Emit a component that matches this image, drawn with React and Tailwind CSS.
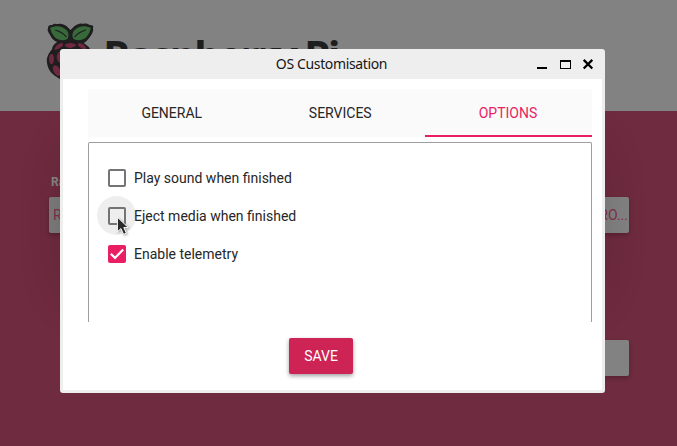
import React from "react";

function RaspberryLogo() {
  return (
    <svg width="49" height="60" viewBox="0 0 48 60" preserveAspectRatio="none" className="shrink-0">
      <g fill="#1e1e1e">
        <path d="M2 5 C2 2 4 2 6 2 C8 0 10 1 12 1 C15 0 18 2 20 3 L24 7 L28 3 C31 1 34 0 36 1 C39 0 41 1 43 2 C46 2 47 3 46 5 C47 8 45 11 43 14 C41 17 39 19 37 20 L42 24 C45 29 47 34 46 41 C44 49 38 53 35 55 C31 58 27 60 24 60 C20 59 16 58 12 55 C7 52 2 48 1 40 C0 34 3 30 6 26 C6 23 8 21 11 19 C8 18 5 15 4 12 C2 9 1 7 2 5Z" />
      </g>
      <g fill="#37693b">
        <path d="M4 5 C10 2 16 3 20 7 C22 9 23 13 21 16 C15 19 9 16 7 12 C5 10 5 7 4 5Z" />
        <path d="M44 5 C38 2 32 3 28 7 C26 9 25 13 27 16 C33 19 39 16 41 12 C43 10 43 7 44 5Z" />
      </g>
      <path d="M9 7 Q16 9 20 14 M39 7 Q32 9 28 14" stroke="#1e1e1e" strokeWidth="1.2" fill="none" />
      <g fill="#702840">
        <path d="M8 27 Q10 20 16 20 Q18 22 15 24 Q12 27 8 27Z" />
        <path d="M40 27 Q38 20 32 20 Q30 22 33 24 Q36 27 40 27Z" />
        <path d="M18 22 Q24 18 30 22 Q27 25 24 25 Q20 25 18 22Z" />
        <ellipse cx="5.4" cy="36" rx="2.4" ry="5" />
        <ellipse cx="15" cy="34" rx="4.5" ry="6" />
        <ellipse cx="33" cy="34" rx="4.5" ry="6" />
        <ellipse cx="10.5" cy="47.5" rx="3.2" ry="5.8" transform="rotate(-28 10.5 47.5)" />
        <ellipse cx="24" cy="47" rx="6" ry="5" />
      </g>
    </svg>
  );
}

function Background() {
  return (
    <div className="flex h-full flex-col bg-[#6f2b40]">
      <header className="flex h-[111px] items-start bg-[#828282] pl-[46px] pt-[23px]">
        <RaspberryLogo />
        <div className="ml-[8px] mt-[7px] whitespace-nowrap font-['Open_Sans',sans-serif] text-[42px] font-bold leading-[50px] tracking-[-2.4px] text-[#1e1e1e]">
          Raspberry Pi
        </div>
      </header>
      <main className="flex flex-1 flex-col pl-[49px] pr-[48px] pt-[64px]">
        <div className="flex h-[22px] items-start pl-[2px] font-[Roboto,sans-serif] text-[12px] font-bold leading-[14px] text-[#868686]">
          Ras
        </div>
        <div className="flex justify-between">
          <div className="flex h-[36px] w-[160px] items-center rounded-[2px] bg-[#7c7c7c] pl-[4px] font-[Roboto,sans-serif] text-[14px] text-[#80304a] shadow-[0_2px_4px_#0000003a]">
            RA
          </div>
          <div className="flex h-[36px] w-[160px] items-center justify-end rounded-[2px] bg-[#828282] pr-px font-[Roboto,sans-serif] text-[14px] text-[#80304a] shadow-[0_2px_4px_#0000003a]">
            RO...
          </div>
        </div>
        <div className="mt-[107px] h-[36px] w-[120px] self-end rounded-[2px] bg-[#828282] shadow-[0_2px_4px_#0000003a]" />
      </main>
    </div>
  );
}

function TitleBar() {
  return (
    <div className="flex h-[30px] items-center">
      <div className="w-[80px]" />
      <div className="flex-1 whitespace-nowrap pr-[2px] text-center font-['Noto_Sans',sans-serif] text-[14px] leading-[20px] tracking-[-0.36px] text-[#161616]">
        OS Customisation
      </div>
      <svg width="80" height="30" viewBox="0 0 80 30" className="shrink-0">
        <path d="M12 18h10v2H12z" fill="#000" />
        <path d="M35 11h11v9H35z M36 13v6h9v-6z" fill="#000" fillRule="evenodd" />
        <path d="M58.7 10.9l8.6 8.6M67.3 10.9l-8.6 8.6" stroke="#000" strokeWidth="2.3" />
      </svg>
    </div>
  );
}

function Tab({ label, active }) {
  return (
    <button
      className={
        active
          ? "w-[167px] border-b-2 border-[#e91e63] pr-px pt-[2px] text-[#e91e63]"
          : "flex-1 border-b-2 border-transparent pr-px pt-[2px] text-[#262626]"
      }
    >
      {label}
    </button>
  );
}

function Option({ label, checked, hovered }) {
  return (
    <label className="flex h-[38px] items-center gap-[8px]">
      <span className="relative flex h-[18px] w-[18px] shrink-0 items-center justify-center">
        {hovered && <span className="absolute left-[-11px] top-[-11px] h-[39px] w-[39px] rounded-full bg-[#eeeeee]" />}
        {checked ? (
          <svg width="18" height="18" viewBox="0 0 18 18">
            <rect width="18" height="18" rx="2" fill="#e91e63" />
            <path d="M2.8 8.8l4.2 4.1 8.2-8.4" fill="none" stroke="#fff" strokeWidth="2.2" />
          </svg>
        ) : (
          <span className="relative h-[18px] w-[18px] rounded-[2px] border-2 border-[#747474]" />
        )}
        {hovered && (
          <svg width="16" height="23" viewBox="0 0 16 23" className="absolute left-[8px] top-[9px] drop-shadow-[1px_1px_1px_#00000055]">
            <path
              d="M1.4 1.2v14.6l3.5-3.2 2.7 5.8 2.8-1.3-2.6-5.5h4.5z"
              fill="#2b2b2b"
              stroke="#fff"
              strokeWidth="1"
              strokeLinejoin="round"
            />
          </svg>
        )}
      </span>
      <span className="relative whitespace-nowrap">{label}</span>
    </label>
  );
}

function Dialog() {
  return (
    <div className="absolute left-[60px] top-[49px] flex h-[344px] w-[545px] flex-col rounded-[3px] bg-[#eeeeee] font-[Roboto,sans-serif] text-[14px] text-[#262626]">
      <TitleBar />
      <div className="mx-[3px] mb-[3px] flex flex-1 flex-col bg-white pl-[25px] pr-[10px] pt-[10px]">
        <div className="flex h-[48px] bg-[#fafafa]">
          <Tab label="GENERAL" />
          <Tab label="SERVICES" />
          <Tab label="OPTIONS" active />
        </div>
        <div className="mt-[5px] h-[180px] rounded-t-[2px] border-x border-t border-[#9e9e9e] pl-[19px] pt-[16px]">
          <Option label="Play sound when finished" />
          <Option label="Eject media when finished" hovered />
          <Option label="Enable telemetry" checked />
        </div>
        <button className="ml-[201px] mt-[16px] h-[36px] w-[64px] rounded-[2px] bg-[#cd2355] text-white shadow-[0_2px_4px_#00000060]">
          SAVE
        </button>
      </div>
    </div>
  );
}

export default function App() {
  return (
    <div className="relative h-[446px] w-[677px] overflow-hidden">
      <Background />
      <div className="absolute left-[76px] top-[150px] h-[142px] w-[513px] rounded-[20px] shadow-[0_0_50px_8px_#00000030]" />
      <Dialog />
    </div>
  );
}
